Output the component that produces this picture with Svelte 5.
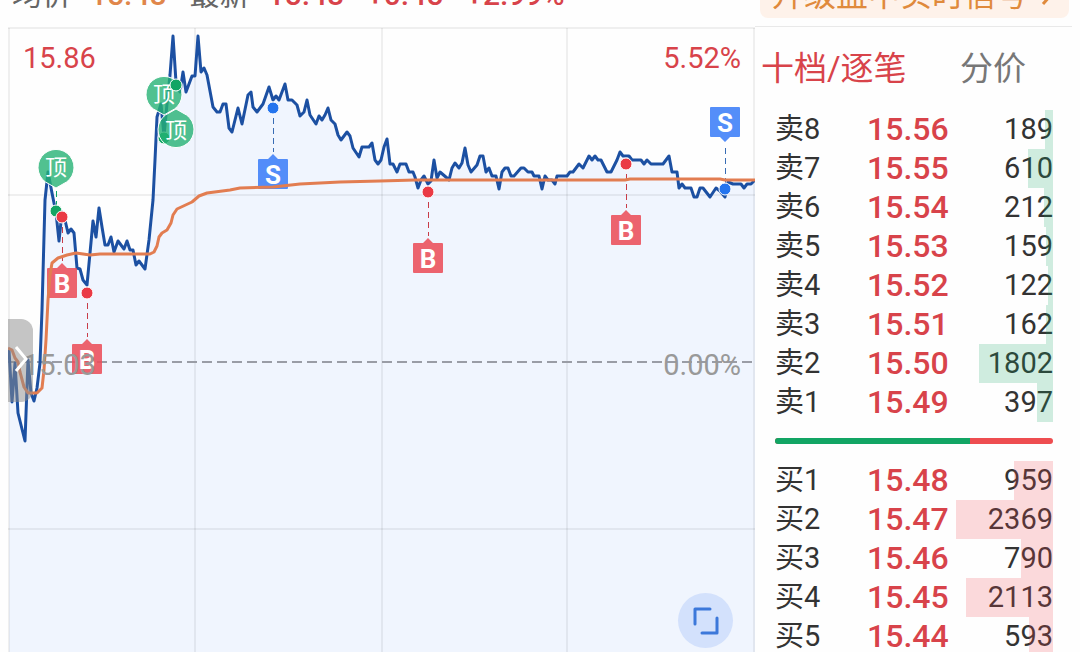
<script lang="ts">
  type Level = { label: string; price: string; volume: number };
  type Signal = { x: number; y: number; kind: 'B' | 'S'; flagY: number; above?: boolean };

  const asks: Level[] = [
    { label: '卖8', price: '15.56', volume: 189 },
    { label: '卖7', price: '15.55', volume: 610 },
    { label: '卖6', price: '15.54', volume: 212 },
    { label: '卖5', price: '15.53', volume: 159 },
    { label: '卖4', price: '15.52', volume: 122 },
    { label: '卖3', price: '15.51', volume: 162 },
    { label: '卖2', price: '15.50', volume: 1802 },
    { label: '卖1', price: '15.49', volume: 397 }
  ];

  const bids: Level[] = [
    { label: '买1', price: '15.48', volume: 959 },
    { label: '买2', price: '15.47', volume: 2369 },
    { label: '买3', price: '15.46', volume: 790 },
    { label: '买4', price: '15.45', volume: 2113 },
    { label: '买5', price: '15.44', volume: 593 }
  ];

  const maxVolume = Math.max(...asks.concat(bids).map((l) => l.volume));
  const askShare = 70;

  const signals: Signal[] = [
    { x: 62, y: 217, kind: 'B', flagY: 283 },
    { x: 87, y: 293, kind: 'B', flagY: 359 },
    { x: 273, y: 108, kind: 'S', flagY: 174 },
    { x: 428, y: 192, kind: 'B', flagY: 258 },
    { x: 626, y: 164, kind: 'B', flagY: 230 },
    { x: 725, y: 189, kind: 'S', flagY: 122, above: true }
  ];

  const priceLine =
    '9,350 12,402 15,363 18,413 25,441 28,360 31,393 34,401 37,388 40,363 42,310 45,200 48,172 52,193 54,203 56,212 ' +
    '57,222 59,241 62,212 65,220 68,233 71,229 74,233 77,268 80,269 83,280 87,285 90,253 93,221 96,237 99,208 102,227 ' +
    '105,245 108,245 111,237 114,252 118,241 124,249 127,241 130,250 133,250 136,265 139,261 145,269 149,240 153,200 ' +
    '155,160 157,117 161,104 164,136 167,104 170,75 173,36 176,82 180,92 183,72 186,92 192,76 195,76 198,36 201,72 204,68 ' +
    '207,75 213,107 217,112 220,112 223,104 226,104 229,128 232,132 238,108 242,124 248,95 251,92 253,107 257,112 263,104 ' +
    '269,87 273,100 276,96 279,100 285,84 288,100 292,100 297,105 300,116 304,112 307,100 310,115 316,124 319,116 322,120 ' +
    '325,115 328,108 331,120 335,124 338,135 341,140 347,132 350,136 353,148 359,157 362,147 369,147 372,143 375,160 ' +
    '378,164 381,160 384,147 387,139 390,164 393,164 397,172 400,164 406,164 409,172 413,172 415,177 418,188 421,180 ' +
    '424,176 428,184 431,181 434,160 437,178 440,172 447,178 449,180 452,168 455,163 459,168 462,163 465,148 468,165 ' +
    '471,172 477,165 480,156 483,156 486,172 489,168 492,176 496,176 499,189 502,172 505,168 508,168 511,176 514,176 ' +
    '521,168 524,168 528,172 532,172 534,176 539,176 542,189 545,176 548,180 552,180 555,184 557,176 567,176 570,172 ' +
    '573,172 579,164 583,168 589,156 592,160 595,156 598,160 601,160 607,172 611,172 617,160 620,152 623,156 629,156 ' +
    '632,160 641,160 644,164 647,160 651,164 663,164 669,156 672,172 677,172 679,188 682,184 685,188 691,188 694,197 ' +
    '697,197 700,188 703,188 710,197 716,188 720,191 725,197 728,182 733,184 741,184 744,188 747,184 751,184 755,180';

  const averageLine =
    '8,348 12,350 15,358 18,362 20,372 24,387 28,393 37,393 42,388 44,370 46,340 48,300 50,275 52,263 58,258 67,255 ' +
    '76,253 90,255 100,254 150,254 154,252 157,246 159,237 162,233 167,230 171,223 173,215 177,209 192,202 199,196 ' +
    '207,193 230,190 240,188 273,187 300,184 340,182 380,181 415,180 625,180 630,179 720,179 725,180 755,180';
</script>

{#snippet levels(rows: Level[], side: string)}
  <table class="levels {side}">
    <tbody>
      {#each rows as row (row.label)}
        <tr>
          <th scope="row">{row.label}</th>
          <td class="price">{row.price}</td>
          <td class="volume">
            {row.volume}
            <span class="depth" style="width: {(row.volume / maxVolume) * 100}%"></span>
          </td>
        </tr>
      {/each}
    </tbody>
  </table>
{/snippet}

{#snippet topPin(x: number, y: number, up: boolean)}
  <g transform="translate({x} {y})">
    <path
      class="pin"
      transform={up ? 'rotate(180)' : undefined}
      d="M0 21 L-7 17 A18 18 0 1 1 7 17 Z"
    />
    <text class="pin-text" y="8">顶</text>
  </g>
{/snippet}

<main class="screen">
  <header class="topbar">
    <div class="quote">
      <span class="pair">均价 <b class="avg">15.48</b></span>
      <span class="pair">最新 <b>15.48</b></span>
      <b>+0.45</b>
      <b>+2.99%</b>
    </div>
    <a class="upgrade" href="#signals">
      升级盘中实时信号
      <svg width="12" height="22" viewBox="0 0 12 22" aria-hidden="true">
        <path d="M2 2 L10 11 L2 20" />
      </svg>
    </a>
  </header>

  <div class="content">
    <section class="chart">
      <svg class="plot" viewBox="8 26 747 626" role="img" aria-label="分时图">
        <polygon class="area" points="9,652 {priceLine} 755,652" />

        <g class="grid">
          <path d="M8 28H755 M8 195H755 M8 529H755" />
          <path d="M9 28V652 M195 28V652 M382 28V652 M567 28V652 M754 28V652" />
        </g>
        <line class="base" x1="7" y1="362" x2="754" y2="362" />

        <polyline class="line price-line" points={priceLine} />

        <line class="dash green" x1="56" y1="191" x2="56" y2="206" />
        <circle class="dot green" cx="56" cy="211" r="6" />
        {@render topPin(56, 167, false)}
        <circle class="dot green" cx="164" cy="138" r="6" />
        {@render topPin(164, 94, false)}
        {@render topPin(176, 130, true)}
        <circle class="dot green" cx="176" cy="85" r="6" />

        {#each signals as s (s.x)}
          <g class={s.kind === 'B' ? 'buy' : 'sell'}>
            <line
              class="dash"
              x1={s.x}
              x2={s.x}
              y1={s.above ? s.flagY + 26 : s.y + 10}
              y2={s.above ? s.y - 6 : s.flagY - 22}
            />
            <circle class="dot" cx={s.x} cy={s.y} r="6" />
            <g transform="translate({s.x} {s.flagY})">
              <path
                class="flag"
                transform={s.above ? 'rotate(180)' : undefined}
                d="M-14 -15 H-5 L0 -20 L5 -15 H14 Q15 -15 15 -14 V14 Q15 15 14 15 H-14 Q-15 15 -15 14 V-14 Q-15 -15 -14 -15 Z"
              />
              <text class="flag-text" y="10">{s.kind}</text>
            </g>
          </g>
        {/each}

        <polyline class="line average-line" points={averageLine} />

        <text class="axis up" x="23" y="68">15.86</text>
        <text class="axis up end" x="741" y="68">5.52%</text>
        <text class="axis" x="23" y="375">15.03</text>
        <text class="axis end" x="741" y="375">0.00%</text>
      </svg>

      <button class="drawer" aria-label="展开列表">
        <svg width="14" height="28" viewBox="0 0 14 28" aria-hidden="true">
          <path d="M2 2 L12 14 L2 26" />
        </svg>
      </button>
      <button class="expand" aria-label="全屏">
        <svg width="28" height="28" viewBox="0 0 28 28" aria-hidden="true">
          <path d="M3 17 V2 H18 M10 26 H25 V11" />
        </svg>
      </button>
    </section>

    <aside class="book">
      <nav class="tabs">
        <button class="tab active">十档/逐笔</button>
        <button class="tab">分价</button>
      </nav>
      <div class="depths">
        {@render levels(asks, 'asks')}
        <div class="ratio">
          <span class="ratio-ask" style="width: {askShare}%"></span>
        </div>
        {@render levels(bids, 'bids')}
      </div>
    </aside>
  </div>
</main>

<style>
  :global(body) {
    margin: 0;
    background: #fefefe;
  }

  .screen {
    --red: #d8434a;
    --green: #12a564;
    height: 100vh;
    overflow: hidden;
    box-sizing: border-box;
    padding: 0 8px;
    font-family: Roboto, 'Noto Sans CJK SC', sans-serif;
    color: #333;
  }

  button {
    border: 0;
    padding: 0;
    background: none;
    font: inherit;
    color: inherit;
  }

  .topbar,
  .content {
    display: grid;
    grid-template-columns: 747fr 317fr;
    align-items: start;
  }

  .topbar {
    grid-template-rows: 26px;
    align-items: end;
  }

  .quote {
    display: flex;
    gap: 23px;
    padding: 0 0 13px 4px;
    font-size: 30px;
    line-height: 36px;
    white-space: nowrap;
    color: #666;
  }

  .quote b {
    font-weight: 500;
    color: var(--red);
  }

  .pair {
    display: flex;
    gap: 18px;
  }

  .quote .avg {
    color: #e0864a;
  }

  .upgrade {
    display: flex;
    align-items: center;
    justify-content: space-between;
    margin: 0 3px 8px 5px;
    padding: 0 16px 1px 12px;
    border-radius: 8px;
    background: #fef2ea;
    color: #e08a3c;
    font-size: 32px;
    line-height: 44px;
    white-space: nowrap;
    text-decoration: none;
  }

  .upgrade path {
    fill: none;
    stroke: currentColor;
    stroke-width: 3;
  }

  .chart {
    position: relative;
  }

  .plot {
    display: block;
    width: 100%;
  }

  .area {
    fill: #f0f5fe;
  }

  .grid {
    fill: none;
    stroke: rgba(0, 0, 0, 0.06);
    stroke-width: 2;
  }

  .base {
    stroke: #9a9da6;
    stroke-width: 2;
    stroke-dasharray: 10 5;
  }

  .line {
    fill: none;
    stroke-width: 3;
    stroke-linejoin: round;
  }

  .price-line {
    stroke: #1c50a2;
  }

  .average-line {
    stroke: #e27d51;
  }

  .dot {
    stroke: #fff;
    stroke-width: 1;
  }

  .dash {
    stroke-width: 1;
    stroke-dasharray: 6 4;
    shape-rendering: crispEdges;
  }

  .dot.green {
    fill: var(--green);
  }

  .dash.green {
    stroke: var(--green);
  }

  .buy .dot {
    fill: #ea3a44;
  }

  .buy .dash {
    stroke: #c83c48;
  }

  .buy .flag {
    fill: rgba(235, 78, 90, 0.88);
  }

  .sell .dot {
    fill: #2474ee;
  }

  .sell .dash {
    stroke: #386cb4;
  }

  .sell .flag {
    fill: rgba(60, 126, 248, 0.88);
  }

  .flag-text {
    fill: #fff;
    font-size: 26px;
    font-weight: 700;
    text-anchor: middle;
  }

  .pin {
    fill: rgba(38, 178, 116, 0.8);
    stroke: #fff;
    stroke-width: 1;
  }

  .pin-text {
    fill: #fff;
    font-size: 22px;
    text-anchor: middle;
  }

  .axis {
    fill: #999;
    font-size: 29px;
  }

  .axis.up {
    fill: var(--red);
  }

  .axis.end {
    text-anchor: end;
  }

  .drawer {
    position: absolute;
    left: 0;
    top: 293px;
    width: 25px;
    height: 83px;
    border-radius: 0 12px 12px 0;
    background: rgba(140, 140, 140, 0.5);
  }

  .drawer path {
    fill: none;
    stroke: #fff;
    stroke-width: 3;
  }

  .expand {
    position: absolute;
    right: 22px;
    bottom: 4px;
    display: grid;
    place-items: center;
    width: 55px;
    height: 55px;
    border-radius: 50%;
    background: #d3e1fc;
  }

  .expand path {
    fill: none;
    stroke: #3c78da;
    stroke-width: 3;
    stroke-linecap: round;
    stroke-linejoin: round;
  }

  .book {
    border-top: 1px solid #e9e9e9;
  }

  .tabs {
    display: flex;
    justify-content: space-between;
    padding: 18px 46px 17px 6px;
    font-size: 33px;
    line-height: 48px;
    white-space: nowrap;
    color: #777;
  }

  .tab.active {
    color: var(--red);
  }

  .depths {
    padding: 0 19px 0 20px;
  }

  .levels {
    width: 100%;
    table-layout: fixed;
    border-collapse: collapse;
    font-size: 29px;
    line-height: 39px;
  }

  .levels th,
  .levels td {
    height: 39px;
    padding: 0;
    white-space: nowrap;
  }

  .levels th {
    width: 22%;
    font-weight: 400;
    text-align: left;
  }

  .levels .price {
    width: 43%;
    box-sizing: border-box;
    padding-right: 7px;
    font-size: 32px;
    font-weight: 500;
    text-align: right;
    color: var(--red);
  }

  .levels .volume {
    position: relative;
    width: 35%;
    text-align: right;
  }

  .depth {
    position: absolute;
    top: 0;
    right: 0;
    height: 100%;
  }

  .asks .depth {
    background: rgba(18, 165, 100, 0.2);
  }

  .bids .depth {
    background: rgba(240, 70, 80, 0.2);
  }

  .ratio {
    display: flex;
    height: 6px;
    margin: 16px 0 17px;
    border-radius: 3px;
    overflow: hidden;
    background: #ee4d50;
  }

  .ratio-ask {
    background: var(--green);
  }
</style>
